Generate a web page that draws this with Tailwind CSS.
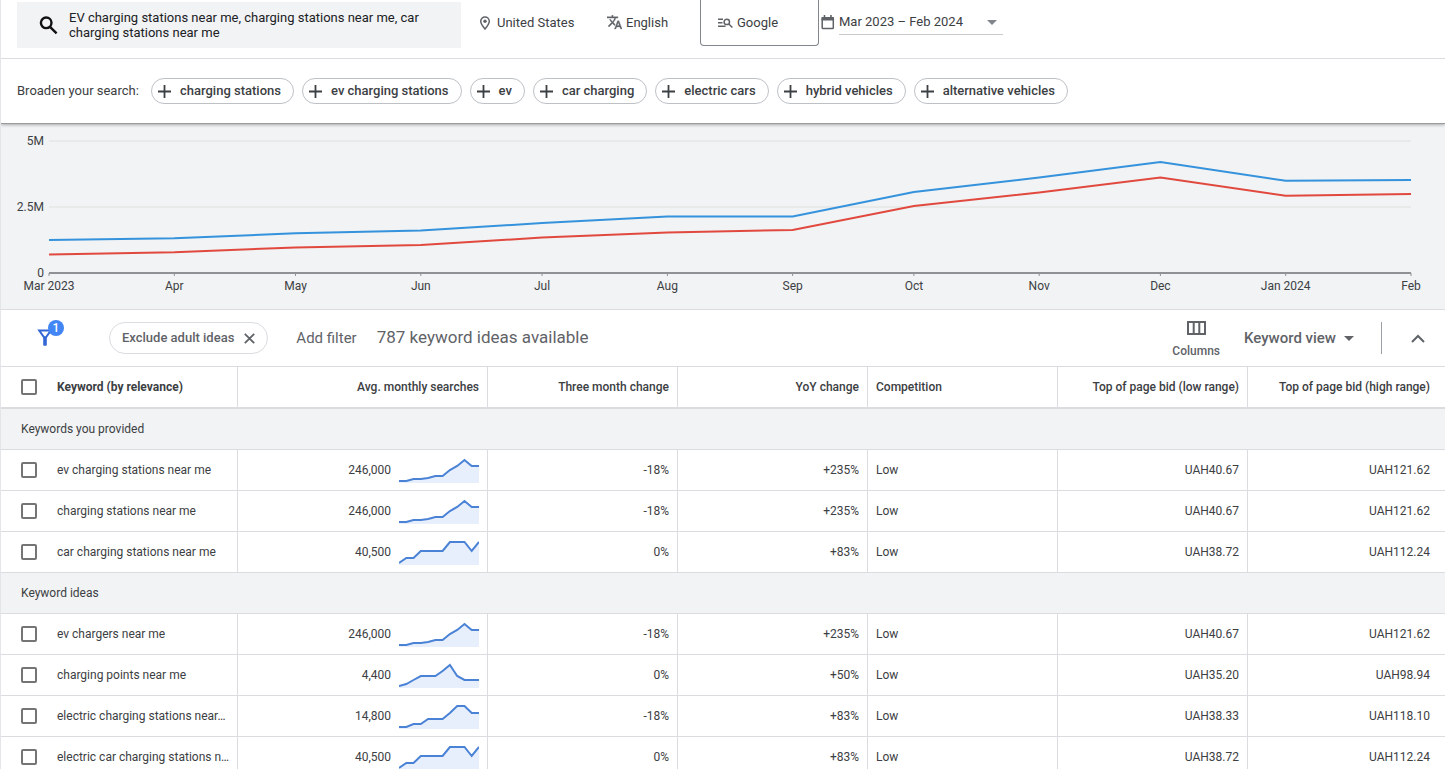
<!DOCTYPE html>
<html lang="en">
<head>
<meta charset="utf-8">
<meta name="viewport" content="width=device-width, initial-scale=1">
<title>Keyword ideas</title>
<script src="https://cdn.jsdelivr.net/npm/@tailwindcss/browser@4"></script>
</head>
<body class="h-screen overflow-hidden border-l border-[#e4e5e8] bg-white font-[Roboto,sans-serif] text-[#3c4043]">

<header class="relative z-10 border-b border-[#9a9b9d] bg-white shadow-[0_1px_3px_rgba(0,0,0,0.3)]">
  <div class="flex h-[59px] items-start border-b border-[#dadce0] pl-4">
    <button class="mt-0.5 flex h-[46px] w-[444px] items-center bg-[#f1f3f4] pl-[22px] text-left text-[13px] leading-[15px] text-[#202124]">
      <svg class="mr-[11px] size-[19px] shrink-0" viewBox="0 0 19 19" fill="none" stroke="#111" stroke-width="2.4"><circle cx="7.200" cy="6.800" r="5.300"/><path d="M11 10.800l6.600 6.600"/></svg>
      <span class="w-[360px]">EV charging stations near me, charging stations near me, car charging stations near me</span>
    </button>
    <button class="ml-[18px] flex h-[45px] w-32 items-center gap-1.5 text-[13px] text-[#3c4043]">
      <svg class="h-3.5 w-3" viewBox="0 0 12 14" fill="none" stroke="#5f6368" stroke-width="1.5"><path d="M6 13C3.400 9.800 1.700 7.400 1.700 5.200a4.300 4.300 0 0 1 8.600 0C10.300 7.400 8.600 9.800 6 13z"/><circle cx="6" cy="5.200" r="1.700" fill="#5f6368" stroke="none"/></svg>
      United States
    </button>
    <button class="flex h-[45px] w-[93px] items-center gap-1 text-[13px] text-[#3c4043]">
      <svg class="size-[15px]" viewBox="1 2 22 21" fill="#5f6368" stroke="#5f6368" stroke-width=".5"><path d="M12.870 15.070l-2.540-2.510.03-.03A17.520 17.520 0 0 0 14.070 6H17V4h-7V2H8v2H1v2h11.170C11.500 7.920 10.440 9.750 9 11.350 8.070 10.320 7.300 9.190 6.690 8h-2c.73 1.630 1.730 3.170 2.980 4.560l-5.090 5.020L4 19l5-5 3.110 3.110.76-2.040zM18.500 10h-2L12 22h2l1.120-3h4.750L21 22h2l-4.500-12zm-2.620 7l1.620-4.330L19.120 17h-3.240z"/></svg>
      English
    </button>
    <button class="flex h-[46px] w-[119px] items-center gap-1 rounded-b-[4px] border border-t-0 border-[#80868b] pl-[17px] text-[13px] text-[#3c4043]">
      <svg class="h-2.5 w-[15px]" viewBox="0 0 15 10" fill="none" stroke="#5f6368" stroke-width="1.500"><path d="M0 1.200h5M0 4.700h4.500M0 8.300h7.500M10.800 6l3.600 3.500"/><circle cx="8.800" cy="3.900" r="2.700"/></svg>
      Google
    </button>
    <button class="flex h-[45px] items-center gap-1 pl-0.5 text-[13px] text-[#3c4043]">
      <svg class="h-[15px] w-3.5" viewBox="0 0 14 15" fill="none" stroke="#5f6368"><rect x="1.200" y="2.700" width="11.100" height="10.800" rx=".8" stroke-width="1.500"/><path d="M.6 3.800h12.300" stroke-width="3.400"/><path d="M3.500 0v3M10 0v3" stroke-width="1.600"/></svg>
      <span class="flex h-[25px] w-[164px] items-center justify-between border-b border-[#c8cacc] pr-1.5">Mar 2023 – Feb 2024
        <svg class="h-[5px] w-[10px]" viewBox="0 0 10 5" fill="#80868b"><path d="M0 0h10L5 5z"/></svg>
      </span>
    </button>
  </div>
  <div class="flex h-16 items-center gap-2 pl-4">
    <span class="w-[126px] text-[13px] whitespace-nowrap">Broaden your search:</span>
    <div id="chips" class="flex gap-2"></div>
  </div>
</header>

<section class="h-[186px] border-b border-[#dadce0] bg-[#f1f3f4] pr-[34px] pl-12" aria-label="Search volume trend">
  <svg id="chart" class="h-[185px] w-full overflow-visible text-[12px]" fill="#3c4043"></svg>
</section>

<div class="flex h-14 items-center bg-white pr-5 pl-9 text-[#5f6368]">
  <button class="relative flex size-8 shrink-0 items-start pt-[7px]" aria-label="Filters">
    <svg class="h-[17px] w-4" viewBox="0 0 16 17" fill="none" stroke="#3367d6" stroke-width="2"><path d="M2.200 1.500h11.600L9 8.300H7zM8 8v8.500"/><path d="M8 8v8.500" stroke-width="3.600"/></svg>
    <span class="absolute -top-0.5 left-[11px] size-4 rounded-full bg-[#4285f4] text-center text-[12px] leading-4 font-medium text-white">1</span>
  </button>
  <button class="ml-10 flex h-8 items-center gap-2.5 rounded-full border border-[#dadce0] px-3 text-[13px] font-medium whitespace-nowrap">Exclude adult ideas
    <svg class="size-[11px]" viewBox="0 0 11 11" stroke="#5f6368" stroke-width="1.800"><path d="M.8.8l9.400 9.400M10.200.8L.8 10.200"/></svg>
  </button>
  <button class="ml-7 text-[15px] whitespace-nowrap">Add filter</button>
  <span class="ml-5 text-[17px] whitespace-nowrap">787 keyword ideas available</span>
  <button class="ml-auto flex flex-col items-center gap-2 pt-1 text-[12px] leading-4 font-medium">
    <svg class="h-3.5 w-[19px]" viewBox="0 0 19 14" fill="none" stroke="#5f6368" stroke-width="2"><path d="M1 1h17v12H1zM6.700 1v12M12.300 1v12"/></svg>
    Columns
  </button>
  <button class="ml-6 flex items-center gap-2 text-[15px] font-medium whitespace-nowrap">Keyword view
    <svg class="h-[5px] w-[10px]" viewBox="0 0 10 5" fill="#5f6368"><path d="M0 0h10L5 5z"/></svg>
  </button>
  <span class="ml-[27px] h-8 w-px bg-[#9aa0a6]"></span>
  <button class="ml-[29px]" aria-label="Collapse">
    <svg class="h-[9px] w-3.5" viewBox="0 0 14 9" fill="none" stroke="#5f6368" stroke-width="2"><path d="M1 8l6-6 6 6"/></svg>
  </button>
</div>

<table class="w-full table-fixed border-separate border-spacing-0 border-t border-[#dadce0] text-[12px]">
  <colgroup><col class="w-[237px]"><col class="w-[250px]"><col class="w-[190px]"><col class="w-[190px]"><col class="w-[190px]"><col class="w-[190px]"><col></colgroup>
  <thead>
    <tr class="h-[42px] text-right">
      <th class="border-r border-b-2 border-[#dadce0] p-0 text-left font-bold">
        <label class="flex items-center gap-5 pl-5"><input type="checkbox" class="size-4 appearance-none rounded-[2px] border-2 border-[#757575]">Keyword (by relevance)</label>
      </th>
      <th class="border-r border-b-2 border-[#dadce0] p-0 pr-2 font-medium">Avg. monthly searches</th>
      <th class="border-r border-b-2 border-[#dadce0] p-0 pr-2 font-medium">Three month change</th>
      <th class="border-r border-b-2 border-[#dadce0] p-0 pr-2 font-medium">YoY change</th>
      <th class="border-r border-b-2 border-[#dadce0] p-0 pl-2 text-left font-medium">Competition</th>
      <th class="border-r border-b-2 border-[#dadce0] p-0 pr-2 font-medium">Top of page bid (low range)</th>
      <th class="border-b-2 border-[#dadce0] p-0 pr-[15px] font-medium">Top of page bid (high range)</th>
    </tr>
  </thead>
  <tbody id="rows"></tbody>
</table>

<script>
const chips = ['charging stations', 'ev charging stations', 'ev', 'car charging', 'electric cars', 'hybrid vehicles', 'alternative vehicles'];
document.getElementById('chips').innerHTML = chips.map(c => `
  <button class="flex h-[26px] items-center gap-[9px] rounded-full border border-[#bdc1c6] pr-3 pl-1.5 text-[13px] font-medium whitespace-nowrap text-[#3c4043]">
    <svg class="size-[13px]" viewBox="0 0 13 13" stroke="#3c4043" stroke-width="1.8"><path d="M6.500 0v13M0 6.500h13"/></svg>${c}</button>`).join('');

// Trend chart: months are placed by day offset, one unit per day
const months = ['Mar 2023', 'Apr', 'May', 'Jun', 'Jul', 'Aug', 'Sep', 'Oct', 'Nov', 'Dec', 'Jan 2024', 'Feb'];
const days = [0, 31, 61, 92, 122, 153, 184, 214, 245, 275, 306, 337];
const total = [116, 114.2, 109.3, 106.600, 99, 92.500, 92.500, 68, 53.500, 38, 56.800, 56];
const mobile = [130.500, 128.300, 123.400, 121, 113.600, 108.500, 106, 82, 68.500, 53.500, 71.800, 70];
const pct = d => (d / 337 * 100).toFixed(2) + '%';
const line = (ys, color) => `<polyline fill="none" stroke="${color}" stroke-width="2" vector-effect="non-scaling-stroke" points="${ys.map((y, i) => days[i] + ',' + y).join(' ')}"/>`;
document.getElementById('chart').innerHTML =
  [[17, '5M'], [83, '2.5M'], [149, '0']].map(([y, t]) =>
    `<line x1="0" x2="100%" y1="${y}" y2="${y}" stroke="${t === '0' ? '#8f9194' : '#e8e9e9'}" stroke-width="2"/><text x="-5" y="${y + 4}" text-anchor="end">${t}</text>`).join('') +
  months.map((m, i) => `<line x1="${pct(days[i])}" x2="${pct(days[i])}" y1="149" y2="152" stroke="#8f9194"/><text x="${pct(days[i])}" y="166" text-anchor="middle">${m}</text>`).join('') +
  `<svg width="100%" height="185" viewBox="0 0 337 185" preserveAspectRatio="none">${line(total, '#3592dc')}${line(mobile, '#e1493f')}</svg>`;

const A = [24, 24, 22, 22, 21, 19, 19, 13, 9, 3, 9, 9];
const B = [24, 19, 19, 12, 12, 12, 12, 3, 3, 3, 12, 3];
const C = [24, 22, 18, 14, 14, 14, 9, 3, 14, 18, 18, 18];
const D = [24, 24, 21, 21, 16, 16, 16, 10, 3, 3, 10, 10];
const rows = [
  'Keywords you provided',
  ['ev charging stations near me', '246,000', A, '-18%', '+235%', 'UAH40.67', 'UAH121.62'],
  ['charging stations near me', '246,000', A, '-18%', '+235%', 'UAH40.67', 'UAH121.62'],
  ['car charging stations near me', '40,500', B, '0%', '+83%', 'UAH38.72', 'UAH112.24'],
  'Keyword ideas',
  ['ev chargers near me', '246,000', A, '-18%', '+235%', 'UAH40.67', 'UAH121.62'],
  ['charging points near me', '4,400', C, '0%', '+50%', 'UAH35.20', 'UAH98.94'],
  ['electric charging stations near…', '14,800', D, '-18%', '+83%', 'UAH38.33', 'UAH118.10'],
  ['electric car charging stations n…', '40,500', B, '0%', '+83%', 'UAH38.72', 'UAH112.24'],
];
const spark = ys => {
  const pts = ys.map((y, i) => (i * 80 / 11).toFixed(1) + ',' + y).join(' ');
  return `<svg class="h-[26px] w-20" viewBox="0 0 80 26"><path d="M${pts} 80,26 0,26z" fill="#e7effc"/><polyline points="${pts}" fill="none" stroke="#4a82d6" stroke-width="2"/></svg>`;
};
document.getElementById('rows').innerHTML = rows.map(r => typeof r === 'string'
  ? `<tr class="h-[41px]"><th colspan="7" class="border-b border-[#dadce0] bg-[#f1f3f4] p-0 pl-5 text-left font-normal">${r}</th></tr>`
  : `<tr class="h-[41px] text-right">
      <td class="border-r border-b border-[#dadce0] p-0 text-left"><label class="flex items-center gap-5 pr-1 pl-5"><input type="checkbox" class="size-4 shrink-0 appearance-none rounded-[2px] border-2 border-[#757575]"><span class="whitespace-nowrap">${r[0]}</span></label></td>
      <td class="border-r border-b border-[#dadce0] p-0 pr-2"><div class="flex items-center justify-end gap-2">${r[1]}${spark(r[2])}</div></td>
      <td class="border-r border-b border-[#dadce0] p-0 pr-2">${r[3]}</td>
      <td class="border-r border-b border-[#dadce0] p-0 pr-2">${r[4]}</td>
      <td class="border-r border-b border-[#dadce0] p-0 pl-2 text-left">Low</td>
      <td class="border-r border-b border-[#dadce0] p-0 pr-2">${r[5]}</td>
      <td class="border-b border-[#dadce0] p-0 pr-[15px]">${r[6]}</td>
    </tr>`).join('');
</script>
</body>
</html>
